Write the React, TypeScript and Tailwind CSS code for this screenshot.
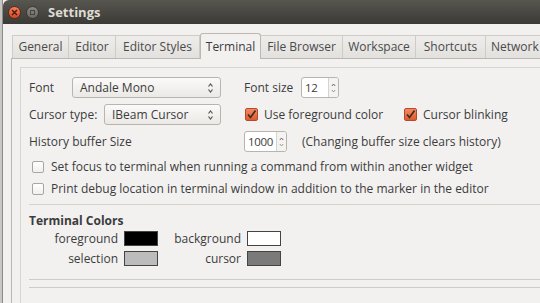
import React from "react";

const tabs = [
  { label: "General", w: "w-[57px]" },
  { label: "Editor", w: "w-[47px]" },
  { label: "Editor Styles", w: "w-[84px]" },
  { label: "Terminal", w: "w-[61px]", active: true },
  { label: "File Browser", w: "w-[82px]" },
  { label: "Workspace", w: "w-[73px]" },
  { label: "Shortcuts", w: "w-[70px]" },
];

const Arrows = () => (
  <svg width="7" height="12" viewBox="0 0 7 12" className="shrink-0">
    <path d="M1.5 4.5 L3.5 2 L5.5 4.5" fill="none" stroke="#555" strokeWidth="1.2" />
    <path d="M1.5 7.5 L3.5 10 L5.5 7.5" fill="none" stroke="#555" strokeWidth="1.2" />
  </svg>
);

const Combo = ({ value, w }: { value: string; w: string }) => (
  <div
    className={`${w} h-[21px] flex items-center justify-between pl-[7px] pr-[6px] rounded-[3px] border border-[#b9b5ae] bg-gradient-to-b from-[#fbfaf9] to-[#ebe9e6]`}
  >
    <span>{value}</span>
    <Arrows />
  </div>
);

const Spin = ({ value, w }: { value: string; w: string }) => (
  <div className={`${w} h-[21px] flex rounded-[3px] border border-[#b9b5ae] bg-white overflow-hidden`}>
    <div className="flex-1 min-w-0 flex items-center pl-[3px] text-[11.5px] tracking-[-0.3px] whitespace-nowrap">{value}</div>
    <div className="w-[10px] shrink-0 flex items-center justify-center border-l border-[#d6d3ce] bg-[#f4f3f1]">
      <svg width="5" height="12" viewBox="0 0 5 12">
        <path d="M0.8 4 L2.5 2 L4.2 4" fill="none" stroke="#666" strokeWidth="1" />
        <path d="M0.8 8 L2.5 10 L4.2 8" fill="none" stroke="#999" strokeWidth="1" />
      </svg>
    </div>
  </div>
);

const Check = ({ checked }: { checked?: boolean }) =>
  checked ? (
    <div className="w-[13px] h-[13px] rounded-[2px] border border-[#b6492a] bg-gradient-to-b from-[#f08a63] to-[#de5a30] flex items-center justify-center shrink-0">
      <svg width="11" height="11" viewBox="0 0 11 11">
        <path d="M2 5.5 L4.5 8.5 L9.5 1.5" fill="none" stroke="#3d2a24" strokeWidth="1.6" />
      </svg>
    </div>
  ) : (
    <div className="w-[12px] h-[12px] rounded-[2px] border border-[#a9a5a0] bg-gradient-to-b from-white to-[#f0efed] shrink-0" />
  );

export default function App() {
  return (
    <div
      className="w-[540px] h-[303px] overflow-hidden bg-[#c9c7c4] flex text-[12px] leading-[16px] text-[#3c3c3c]"
      style={{ fontFamily: '"Open Sans", "Noto Sans", sans-serif' }}
    >
      <div className="w-[3px] shrink-0 border-r border-[#8d8b87]" />
      <div className="flex-1 min-w-0 flex flex-col bg-[#f2f1f0]">
        {/* title bar */}
        <div className="h-[24px] shrink-0 rounded-tl-[6px] bg-gradient-to-b from-[#57564f] to-[#3b3a36] flex items-center pl-[5px] gap-[5px]">
          <div className="w-[13px] h-[13px] rounded-full bg-gradient-to-b from-[#f37e5b] to-[#d6481f] border border-[#5a2a1a] flex items-center justify-center">
            <svg width="7" height="7" viewBox="0 0 7 7">
              <path d="M1 1 L6 6 M6 1 L1 6" stroke="#4b1d10" strokeWidth="1.5" />
            </svg>
          </div>
          <div className="w-[13px] h-[13px] rounded-full bg-gradient-to-b from-[#8a8880] to-[#6b6a63] border border-[#3a3935] flex items-center justify-center">
            <div className="w-[5px] h-[5px] border border-[#45443f]" />
          </div>
          <span className="ml-[4px] text-[13px] font-bold text-[#dfdbd2]">Settings</span>
        </div>

        {/* notebook */}
        <div className="flex-1 flex flex-col pt-[9px] pl-[8px]">
          <div className="flex items-end h-[25px] pl-[1px]">
            {tabs.map((t) =>
              t.active ? (
                <div
                  key={t.label}
                  className={`${t.w} shrink-0 h-[26px] -mb-[1px] rounded-t-[3px] border border-b-0 border-[#bcb8b1] bg-[#f2f1f0] flex items-center justify-center relative z-10`}
                >
                  {t.label}
                </div>
              ) : (
                <div
                  key={t.label}
                  className={`${t.w} shrink-0 h-[23px] border border-b-0 border-l-0 first:border-l border-[#cfcbc5] bg-gradient-to-b from-[#eeedeb] to-[#e3e1de] flex items-center justify-center text-[#4a4a4a]`}
                >
                  {t.label}
                </div>
              )
            )}
            <div className="flex-1 min-w-0 h-[23px] border-t border-[#cfcbc5] bg-gradient-to-b from-[#eeedeb] to-[#e3e1de] flex items-center pl-[5px] text-[#4a4a4a] whitespace-nowrap">
              Network
            </div>
          </div>
          <div className="flex-1 flex flex-col border-l border-t border-[#bcb8b1] pl-[8px] pt-[8px]">
            <div className="flex-1 flex flex-col border-l border-t border-[#d9d6d1] pl-[8px] pt-[9px]">
              {/* row 1 */}
              <div className="flex items-center h-[21px]">
                <span className="w-[43px] shrink-0">Font</span>
                <Combo value="Andale Mono" w="w-[149px]" />
                <span className="ml-[23px] w-[57px] shrink-0">Font size</span>
                <Spin value="12" w="w-[38px]" />
              </div>
              {/* row 2 */}
              <div className="flex items-center h-[21px] mt-[6px]">
                <span className="w-[75px] shrink-0">Cursor type:</span>
                <Combo value="IBeam Cursor" w="w-[117px]" />
                <div className="ml-[24px] flex items-center gap-[6px] w-[159px] shrink-0">
                  <Check checked />
                  <span>Use foreground color</span>
                </div>
                <div className="flex items-center gap-[6px]">
                  <Check checked />
                  <span>Cursor blinking</span>
                </div>
              </div>
              {/* row 3 */}
              <div className="flex items-center h-[21px] mt-[6px]">
                <span className="w-[215px] shrink-0">History buffer Size</span>
                <Spin value="1000" w="w-[43px]" />
                <span className="ml-[15px]">(Changing buffer size clears history)</span>
              </div>
              {/* check rows */}
              <div className="flex items-center gap-[7px] pl-[3px] h-[16px] mt-[7px]">
                <Check />
                <span>Set focus to terminal when running a command from within another widget</span>
              </div>
              <div className="flex items-center gap-[7px] pl-[3px] h-[16px] mt-[6px]">
                <Check />
                <span>Print debug location in terminal window in addition to the marker in the editor</span>
              </div>
              <div className="h-px bg-[#d4d1cc] mt-[7px]" />
              <div className="font-bold mt-[8px] h-[16px] flex items-center">Terminal Colors</div>
              <div className="grid grid-cols-[89px_34px_77px_34px] grid-rows-[15px_15px] gap-x-[6px] gap-y-[5px] items-center mt-[2px]">
                <span className="text-right">foreground</span>
                <div className="h-[15px] border border-[#444] bg-black" />
                <span className="text-right">background</span>
                <div className="h-[15px] border border-[#444] bg-white" />
                <span className="text-right">selection</span>
                <div className="h-[15px] border border-[#444] bg-[#bcbcbc]" />
                <span className="text-right">cursor</span>
                <div className="h-[15px] border border-[#444] bg-[#7a7a7a]" />
              </div>
              <div className="h-px bg-[#cfccc7] mt-[13px]" />
              <div className="h-px bg-[#cfccc7] mt-[7px]" />
            </div>
          </div>
        </div>
      </div>
    </div>
  );
}
